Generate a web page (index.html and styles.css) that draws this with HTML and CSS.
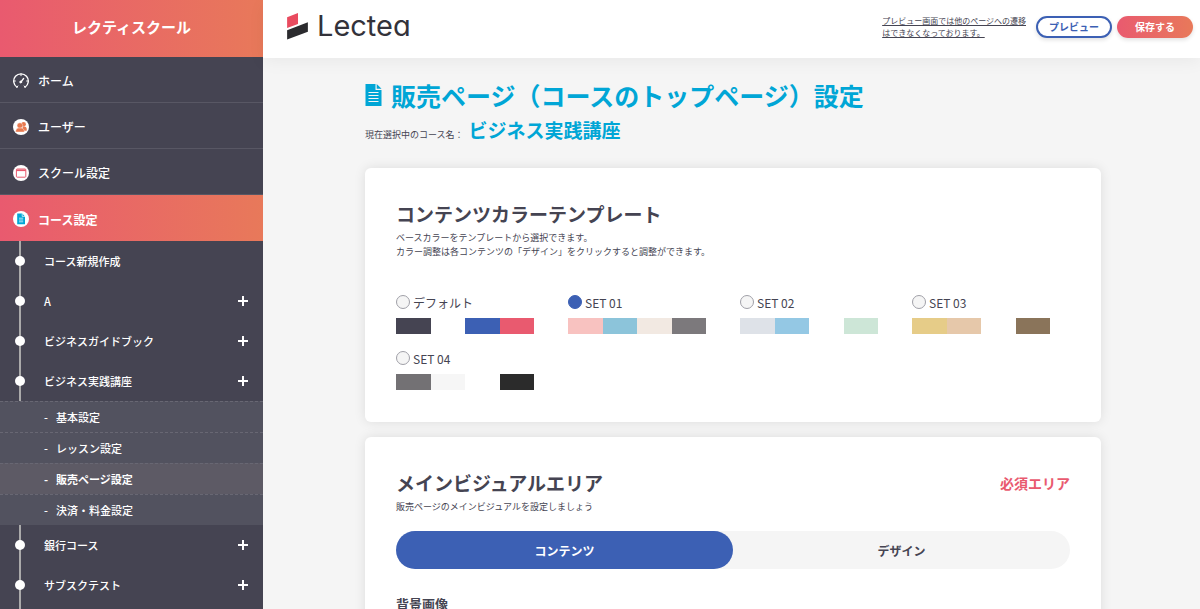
FILE: index.html
```html
<!DOCTYPE html>
<html lang="ja">
<head>
    <meta charset="UTF-8">
    <meta name="viewport" content="width=device-width, initial-scale=1.0">
    <title>販売ページ設定 | Lectea</title>
    <link rel="stylesheet" href="styles.css">
</head>
<body>

<div class="layout">
    <aside class="sidebar">
        <p class="school-name">レクティスクール</p>
        <nav>
            <ul class="menu">
                <li>
                    <a href="#" class="menu-link">
                        <svg class="menu-icon" viewBox="0 0 16 16" fill="none" stroke="#fff" stroke-width="1.3" stroke-linecap="round">
                            <path d="M4 14.2A7.3 7.3 0 1 1 12 14.2"/>
                            <path d="M8 .9v1.8M1 8h1.4M13.6 8H15M4 14.2l.8-1.2M12 14.2l-.8-1.2" stroke-width="1"/>
                            <path d="M8 8.8L10.600 5.500" stroke-width="1.3"/>
                            <circle cx="7.7" cy="9" r="1" fill="#fff" stroke-width=".8"/>
                        </svg>
                        ホーム
                    </a>
                </li>
                <li>
                    <a href="#" class="menu-link">
                        <svg class="menu-icon" viewBox="0 0 16 16">
                            <circle cx="8" cy="8" r="8" fill="#fff"/>
                            <g fill="#e8794f">
                                <circle cx="10.6" cy="5.2" r="2.3"/>
                                <path d="M9.5 7.500h2c1.3 0 2.200 1 2.200 2.800v1.400H10z"/>
                                <circle cx="6.9" cy="6.6" r="2.8" stroke="#fff" stroke-width=".4"/>
                                <path d="M2.6 13c0-2.4 1.3-3.9 3-3.9h2.800c1.7 0 3 1.5 3 3.9z" stroke="#fff" stroke-width=".4"/>
                            </g>
                        </svg>
                        ユーザー
                    </a>
                </li>
                <li>
                    <a href="#" class="menu-link">
                        <svg class="menu-icon" viewBox="0 0 16 16">
                            <circle cx="8" cy="8" r="8" fill="#fff"/>
                            <rect x="3.4" y="4" width="9.4" height="8.2" rx=".8" fill="#fff" stroke="#e95a6f"/>
                            <path d="M3.4 5.3h9.4" stroke="#e95a6f" stroke-width="1.6"/>
                        </svg>
                        スクール設定
                    </a>
                </li>
                <li>
                    <a href="#" class="menu-link active">
                        <svg class="menu-icon" viewBox="0 0 16 16">
                            <circle cx="8" cy="8" r="8" fill="#fff"/>
                            <path d="M4.2 2.6h5l2.8 2.8v7.8H4.2z" fill="#00a6d6"/>
                            <path d="M9.2 2.6v2.8H12M6 7.2h4.2M6 9h4.2M6 10.8h4.2" fill="none" stroke="#fff" stroke-width=".7"/>
                        </svg>
                        コース設定
                    </a>
                    <ul class="courses">
                        <li><div class="course"><span class="dot"></span><a href="#">コース新規作成</a></div></li>
                        <li><div class="course"><span class="dot"></span><a href="#">A</a><button type="button" class="plus" aria-label="開く"></button></div></li>
                        <li><div class="course"><span class="dot"></span><a href="#">ビジネスガイドブック</a><button type="button" class="plus" aria-label="開く"></button></div></li>
                        <li>
                            <div class="course"><span class="dot"></span><a href="#">ビジネス実践講座</a><button type="button" class="plus" aria-label="開く"></button></div>
                            <ul class="submenu">
                                <li><a href="#">基本設定</a></li>
                                <li><a href="#">レッスン設定</a></li>
                                <li><a href="#" class="current">販売ページ設定</a></li>
                                <li><a href="#">決済・料金設定</a></li>
                            </ul>
                        </li>
                        <li><div class="course"><span class="dot"></span><a href="#">銀行コース</a><button type="button" class="plus" aria-label="開く"></button></div></li>
                        <li><div class="course"><span class="dot"></span><a href="#">サブスクテスト</a><button type="button" class="plus" aria-label="開く"></button></div></li>
                    </ul>
                </li>
            </ul>
        </nav>
    </aside>

    <div class="content">
        <header class="header">
            <a href="#" class="logo">
                <svg class="logo-mark" viewBox="0 0 20 26">
                    <path d="M0 4L10.500 0V10.500L0 14.500Z" fill="#e94b5f"/>
                    <path d="M0 16.500L20 9V18L0 25.500Z" fill="#2b2b2e"/>
                </svg>
                Lectea
            </a>
            <div class="header-actions">
                <a href="#" class="note">プレビュー画面では他のページへの遷移<br>はできなくなっております。</a>
                <button type="button" class="btn btn-preview">プレビュー</button>
                <button type="button" class="btn btn-save">保存する</button>
            </div>
        </header>

        <main class="main">
            <h1 class="page-title">
                <svg class="title-icon" viewBox="0 0 16 22">
                    <path d="M0 0h10v6h6v16H0z" fill="#00a6d6"/>
                    <path d="M11.200 0L16 4.800h-4.800z" fill="#00a6d6"/>
                    <path d="M3 8.500h10M3 11.500h10M3 14.500h10M3 17.500h10" stroke="#f5f5f5" stroke-width="1.200"/>
                </svg>
                販売ページ（コースのトップページ）設定
            </h1>
            <p class="course-name">現在選択中のコース名：<strong>ビジネス実践講座</strong></p>

            <section class="card">
                <h2>コンテンツカラーテンプレート</h2>
                <p class="desc">ベースカラーをテンプレートから選択できます。<br>カラー調整は各コンテンツの「デザイン」をクリックすると調整ができます。</p>
                <div class="templates">
                    <label class="template">
                        <span class="template-name"><input type="radio" name="template">デフォルト</span>
                        <span class="swatches"><i class="c-navy"></i><i class="c-white"></i><i class="c-blue"></i><i class="c-red"></i></span>
                    </label>
                    <label class="template">
                        <span class="template-name"><input type="radio" name="template" checked>SET 01</span>
                        <span class="swatches"><i class="c-pink"></i><i class="c-aqua"></i><i class="c-cream"></i><i class="c-gray"></i></span>
                    </label>
                    <label class="template">
                        <span class="template-name"><input type="radio" name="template">SET 02</span>
                        <span class="swatches"><i class="c-silver"></i><i class="c-sky"></i><i class="c-white"></i><i class="c-mint"></i></span>
                    </label>
                    <label class="template">
                        <span class="template-name"><input type="radio" name="template">SET 03</span>
                        <span class="swatches"><i class="c-gold"></i><i class="c-peach"></i><i class="c-white"></i><i class="c-brown"></i></span>
                    </label>
                    <label class="template">
                        <span class="template-name"><input type="radio" name="template">SET 04</span>
                        <span class="swatches"><i class="c-stone"></i><i class="c-light"></i><i class="c-white"></i><i class="c-black"></i></span>
                    </label>
                </div>
            </section>

            <section class="card">
                <div class="card-head">
                    <h2>メインビジュアルエリア</h2>
                    <span class="required">必須エリア</span>
                </div>
                <p class="desc">販売ページのメインビジュアルを設定しましょう</p>
                <div class="tabs">
                    <button type="button" class="tab selected">コンテンツ</button>
                    <button type="button" class="tab">デザイン</button>
                </div>
                <h3>背景画像</h3>
            </section>
        </main>
    </div>
</div>

</body>
</html>
```
FILE: styles.css
```css
* {
    box-sizing: border-box;
}

body {
    margin: 0;
    font-family: "Noto Sans CJK JP", sans-serif;
    font-size: 12px;
    color: #454452;
    background-color: #f5f5f5;
}

h1, h2, h3, p, ul {
    margin: 0;
    padding: 0;
}

ul {
    list-style: none;
}

a {
    color: inherit;
    text-decoration: none;
}

button {
    font-family: inherit;
    padding: 0;
    border: none;
    cursor: pointer;
}

.layout {
    display: flex;
    height: 100vh;
    overflow: hidden;
}

/* sidebar */
.sidebar {
    flex: 0 0 263px;
    background-color: #454452;
    color: #fff;
    overflow: hidden;
}

.school-name {
    height: 57px;
    line-height: 54px;
    text-align: center;
    font-size: 15px;
    font-weight: bold;
    background: linear-gradient(90deg, #e95a6f, #e8795a);
}

.menu-link {
    display: flex;
    align-items: center;
    gap: 9px;
    height: 46px;
    padding: 2px 13px 0;
    font-weight: 500;
    border-bottom: 1px solid #585764;
}

.menu-link.active {
    font-weight: bold;
    border-bottom: none;
    background: linear-gradient(90deg, #e95a6f, #e8795a);
}

.menu-icon {
    width: 16px;
    height: 16px;
}

.courses {
    padding-bottom: 40px;
    background: linear-gradient(#aaa, #aaa) 19px 0 / 2px 100% no-repeat;
}

.course {
    display: flex;
    align-items: center;
    height: 40px;
    padding: 0 15px;
    font-size: 11px;
    font-weight: 500;
}

.course a {
    flex: 1;
}

.dot {
    width: 10px;
    height: 10px;
    margin-right: 19px;
    border-radius: 50%;
    background-color: #fff;
}

.plus {
    width: 10px;
    height: 10px;
    background:
        linear-gradient(#fff, #fff) center / 10px 2px no-repeat,
        linear-gradient(#fff, #fff) center / 2px 10px no-repeat;
}

.submenu a {
    display: flex;
    align-items: center;
    height: 31px;
    padding-left: 44px;
    font-size: 11px;
    font-weight: 500;
    background-color: #52525f;
    border-top: 1px dashed #686773;
}

.submenu a::before {
    content: "-";
    width: 12px;
}

.submenu .current {
    font-weight: bold;
    background-color: #5d5a65;
}

/* header */
.content {
    flex: 1;
    min-width: 0;
}

.header {
    display: flex;
    justify-content: space-between;
    align-items: flex-start;
    height: 58px;
    padding: 12px 7px 0 24px;
    background-color: #fff;
    box-shadow: 0 4px 16px rgba(0, 0, 0, 0.05);
}

.logo {
    display: flex;
    align-items: center;
    gap: 9px;
    font-family: Inter, sans-serif;
    font-feature-settings: "cv11";
    font-size: 29px;
    line-height: 28px;
    color: #33323a;
}

.logo-mark {
    width: 21px;
    height: 27px;
}

.header-actions {
    display: flex;
    align-items: center;
    gap: 5px;
    padding-top: 3px;
}

.note {
    margin-right: 5px;
    font-size: 8px;
    line-height: 12px;
    text-decoration: underline;
}

.btn {
    width: 76px;
    height: 22px;
    border-radius: 11px;
    font-size: 10px;
    line-height: 16px;
    font-weight: bold;
    box-shadow: 0 2px 4px rgba(0, 0, 0, 0.12);
}

.btn-preview {
    color: #3c60b4;
    background-color: #fff;
    border: 2px solid #3c60b4;
}

.btn-save {
    color: #fff;
    background: linear-gradient(90deg, #e95a6f, #e8795a);
}

/* main */
.main {
    max-width: 785px;
    margin: 0 auto;
    padding: 22px 23px 0 26px;
}

.page-title {
    display: flex;
    align-items: center;
    gap: 9px;
    font-size: 25px;
    line-height: 30px;
    color: #00a6d6;
}

.title-icon {
    width: 17px;
    height: 22px;
}

.course-name {
    margin: 5px 0 18px;
    font-size: 9px;
    line-height: 30px;
}

.course-name strong {
    margin-left: 5px;
    font-size: 19px;
    color: #00a6d6;
}

.card {
    margin-bottom: 15px;
    padding: 31px 31px 32px;
    border-radius: 6px;
    background-color: #fff;
    box-shadow: 0 0 12px rgba(0, 0, 0, 0.1);
}

.card h2 {
    font-size: 19px;
    line-height: 30px;
}

.card h3 {
    margin-top: 25px;
    font-size: 13px;
    line-height: 20px;
}

.desc {
    margin-top: 2px;
    font-size: 9px;
    line-height: 14px;
}

.card-head {
    display: flex;
    justify-content: space-between;
    align-items: center;
}

.required {
    font-size: 14px;
    line-height: 20px;
    font-weight: bold;
    color: #e95a6f;
}

.templates {
    display: grid;
    grid-template-columns: repeat(auto-fill, 138px);
    gap: 15px 34px;
    margin-top: 34px;
}

.template-name {
    display: flex;
    align-items: center;
    gap: 3px;
    height: 18px;
}

.template input {
    appearance: none;
    width: 14px;
    height: 14px;
    margin: 0;
    border: 1px solid #a0a0a8;
    border-radius: 50%;
    background-color: #f5f5f5;
}

.template input:checked {
    border-color: #3c60b4;
    background-color: #3c60b4;
}

.swatches {
    display: flex;
    height: 16px;
    margin-top: 7px;
}

.swatches i {
    flex: 1;
}

.c-navy { background-color: #454452; }
.c-white { background-color: #fff; }
.c-blue { background-color: #3c60b4; }
.c-red { background-color: #e95a6f; }
.c-pink { background-color: #f8c2c0; }
.c-aqua { background-color: #8cc4da; }
.c-cream { background-color: #f2e9e2; }
.c-gray { background-color: #7c797c; }
.c-silver { background-color: #dee2e8; }
.c-sky { background-color: #94c8e4; }
.c-mint { background-color: #cde6d7; }
.c-gold { background-color: #e6cc88; }
.c-peach { background-color: #e6c8aa; }
.c-brown { background-color: #8a745a; }
.c-stone { background-color: #737174; }
.c-light { background-color: #f6f6f6; }
.c-black { background-color: #2b2b2b; }

.tabs {
    display: flex;
    margin-top: 17px;
    border-radius: 19px;
    background-color: #f5f5f5;
}

.tab {
    flex: 1;
    height: 38px;
    border-radius: 19px;
    font-size: 12px;
    font-weight: bold;
    color: #454452;
    background-color: transparent;
}

.tab.selected {
    color: #fff;
    background-color: #3c60b4;
}
```
